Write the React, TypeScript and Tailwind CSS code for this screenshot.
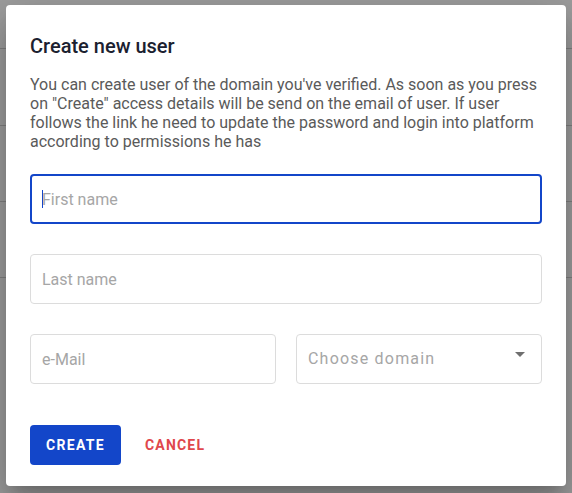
import React from "react";

export default function App() {
  return (
    <div className="relative h-[493px] w-full overflow-hidden bg-white" style={{ fontFamily: "Roboto, 'Liberation Sans', sans-serif" }}>
      {/* page underneath */}
      <div className="flex flex-col">
        <div className="h-[49px] border-b border-[#d0d0d0]" />
        <div className="h-[77px] border-b border-[#d0d0d0]" />
        <div className="h-[76px] border-b border-[#d0d0d0]" />
        <div className="h-[76px] border-b border-[#d0d0d0]" />
      </div>
      {/* backdrop */}
      <div className="absolute inset-0 bg-[rgba(0,0,0,0.38)]" />
      {/* dialog */}
      <div className="absolute left-[6px] top-[5px] flex w-[560px] flex-col rounded-[4px] bg-white px-6 pt-[27px] pb-[21px] shadow-[0_11px_15px_-7px_rgba(0,0,0,0.2),0_24px_38px_3px_rgba(0,0,0,0.14),0_9px_46px_8px_rgba(0,0,0,0.12)]">
        <h2 className="text-[20px] font-medium leading-[28px] text-[#1b2130]">Create new user</h2>
        <p className="mt-[15px] text-[16px] leading-[19px] text-[#5a5a5a]">
          You can create user of the domain you've verified. As soon as you press on "Create" access details will be send on the email of user. If user follows the link he need to update the password and login into platform according to permissions he has
        </p>
        <div className="mt-[23px] flex flex-col gap-[30px]">
          <div className="relative">
            <input
              placeholder="First name"
              className="h-[50px] w-full rounded-[4px] border-2 border-[#1346c9] px-[10px] text-[16px] text-[#333] outline-none placeholder:text-[#a6a6a6]"
            />
            <span className="absolute left-[12px] top-[16px] h-[18px] w-px bg-[#1346c9]" />
          </div>
          <input
            placeholder="Last name"
            className="h-[50px] w-full rounded-[4px] border border-[#dcdcdc] px-[11px] text-[16px] text-[#333] outline-none placeholder:text-[#a6a6a6]"
          />
          <div className="flex gap-5">
            <input
              placeholder="e-Mail"
              className="h-[50px] min-w-0 flex-1 rounded-[4px] border border-[#dcdcdc] px-[11px] text-[16px] text-[#333] outline-none placeholder:text-[#a6a6a6]"
            />
            <div className="relative flex h-[50px] flex-1 items-center rounded-[4px] border border-[#dcdcdc] px-[11px]">
              <span className="text-[16px] tracking-[1.2px] text-[#a6a6a6]">Choose domain</span>
              <svg className="absolute right-[16px] top-[17px]" width="10" height="5" viewBox="0 0 10 5">
                <path d="M0 0 L10 0 L5 5 Z" fill="#6f6f6f" />
              </svg>
            </div>
          </div>
        </div>
        <div className="mt-[41px] flex items-center">
          <button className="h-[40px] rounded-[4px] bg-[#1346c9] px-4 text-[14px] font-bold tracking-[1.3px] text-white">
            CREATE
          </button>
          <button className="ml-[8px] h-[40px] px-4 text-[14px] font-bold tracking-[1.2px] text-[#e0474c]">
            CANCEL
          </button>
        </div>
      </div>
    </div>
  );
}
